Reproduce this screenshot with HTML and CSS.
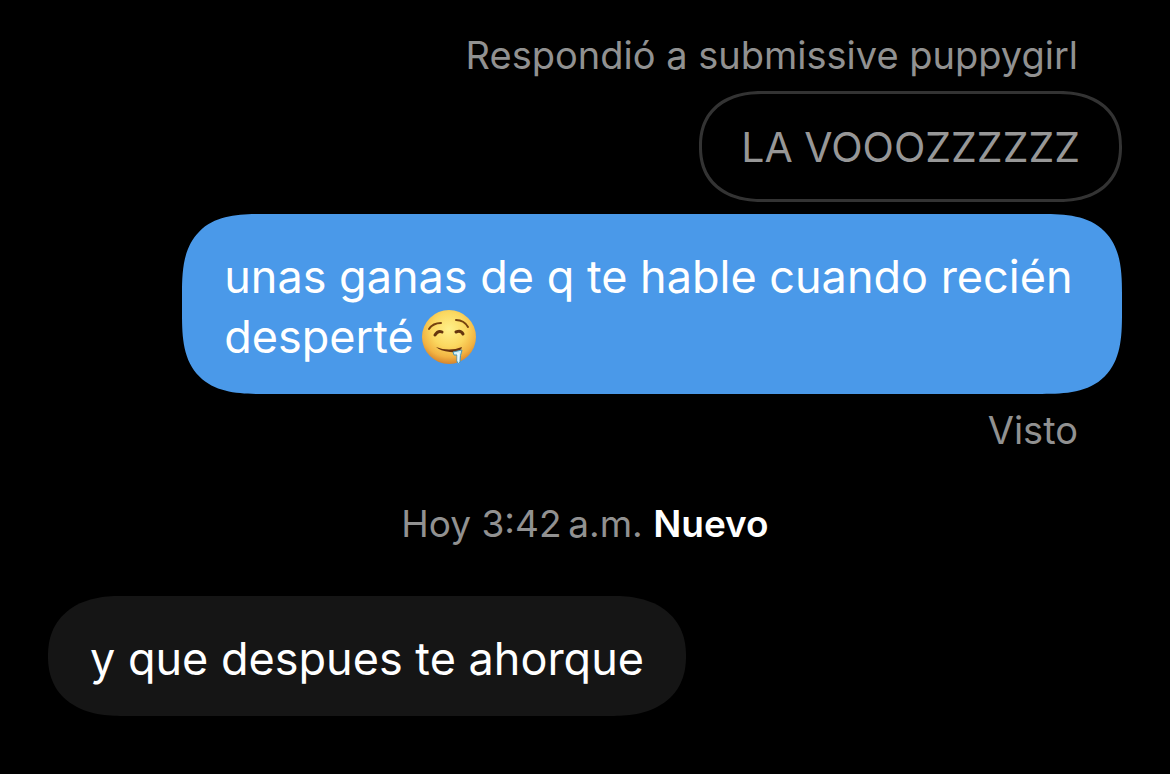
FILE: index.html
```
<!DOCTYPE html>
<html lang="es">
<head>
  <meta charset="UTF-8">
  <meta name="viewport" content="width=device-width, initial-scale=1">
  <title>Mensajes</title>
  <link rel="stylesheet" href="styles.css">
</head>
<body>
  <main class="chat">
    <div class="message sent">
      <p class="meta">Respondió a submissive puppygirl</p>
      <blockquote class="bubble bubble-quote">LA VOOOZZZZZZ</blockquote>
      <p class="bubble bubble-sent">unas ganas de q te hable cuando recién desperté<svg class="emoji" viewBox="0 0 56 56" role="img" aria-label="cara babeando">
          <defs>
            <radialGradient id="face" cx="50%" cy="36%" r="64%">
              <stop offset="0" stop-color="#fff08a"/>
              <stop offset="0.5" stop-color="#fbd860"/>
              <stop offset="0.8" stop-color="#f2b342"/>
              <stop offset="1" stop-color="#d6842c"/>
            </radialGradient>
          </defs>
          <circle cx="28" cy="28" r="27" fill="url(#face)"/>
          <g fill="none" stroke="#75420f" stroke-width="2" stroke-linecap="round">
            <path d="M8 20Q12 14 20 14"/>
            <path d="M35 11Q43 11 47 18"/>
          </g>
          <g fill="none" stroke="#65350e" stroke-width="3" stroke-linecap="round">
            <path d="M14 26Q17 21 21 23"/>
            <path d="M35 23Q40 21 42 25"/>
          </g>
          <path d="M15 38Q28 43 41 38Q40 44 29 43Q19 42 15 38Z" fill="#69330f"/>
          <path d="M32 43L41 41Q39 46 39 53Q38 56 36 53L36 46L33 46Z" fill="#d3f1f8" stroke="#4795b5" stroke-width="1"/>
          <path d="M37 44V52" fill="none" stroke="#fff" stroke-width="1"/>
        </svg></p>
      <p class="meta meta-seen">Visto</p>
    </div>

    <p class="divider"><time>Hoy 3:42&#8239;a.m.</time> <strong>Nuevo</strong></p>

    <div class="message received">
      <p class="bubble bubble-received">y que despues te ahorque</p>
    </div>
  </main>
</body>
</html>
```
FILE: styles.css
```
* {
  box-sizing: border-box;
  margin: 0;
  padding: 0;
}

body {
  background: #000000;
  color: #ffffff;
  font-family: Inter, "Liberation Sans", sans-serif;
}

.chat {
  display: flex;
  flex-direction: column;
  padding: 31px 48px 56px;
}

.message {
  display: flex;
  flex-direction: column;
}

.sent {
  align-items: flex-end;
}

.received {
  align-items: flex-start;
}

/* Bubbles */
.bubble {
  max-width: 87.5%;
  padding: 33px 42px 27px;
  border-radius: 60px;
  font-size: 45px;
  line-height: 60px;
}

/* Smoother corners where the browser has them */
@supports (corner-shape: superellipse(1.5)) {
  .bubble {
    border-radius: 72px / 60px;
    corner-shape: superellipse(1.2);
  }

  .bubble-sent {
    border-radius: 80px;
    corner-shape: superellipse(1.5);
  }

  .bubble-quote {
    border-radius: 64px / 55px;
  }
}

.bubble-quote {
  margin-bottom: 12px;
  padding: 28px 39px 27px;
  border: 3px solid #333333;
  color: #979797;
  font-size: 41px;
  line-height: 50px;
}

.bubble-sent {
  padding-right: 40px;
  background: #4a99e9;
}

.bubble-received {
  background: #151515;
}

.emoji {
  width: 56px;
  height: 56px;
  margin-left: 7px;
  vertical-align: -12px;
}

/* Labels around the bubbles */
.meta,
.divider {
  color: #919191;
  font-size: 38px;
  line-height: 48px;
}

.meta {
  padding: 0 44px;
  margin-bottom: 12px;
}

.meta-seen {
  margin: 12px 0 0;
}

.divider {
  margin: 46px 0 48px;
  font-size: 37px;
  text-align: center;
}

.divider strong {
  color: #ffffff;
  font-weight: 600;
}
```
